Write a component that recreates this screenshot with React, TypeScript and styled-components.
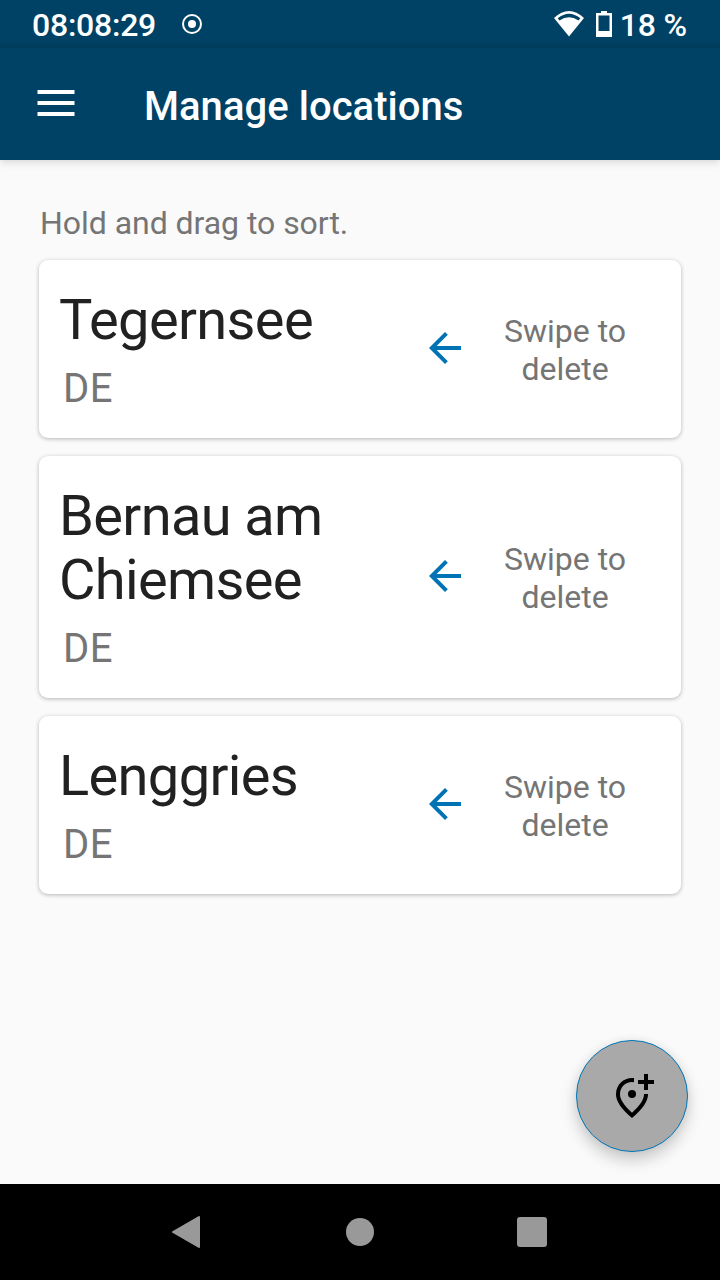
import React from "react";
import styled, { createGlobalStyle } from "styled-components";

const Global = createGlobalStyle`
  * { box-sizing: border-box; }
  body { margin: 0; font-family: Roboto, "Liberation Sans", sans-serif; }
`;
const Screen = styled.div`
  width: 720px; height: 1280px; display: flex; flex-direction: column;
  background: #fafafa; overflow: hidden; position: relative;
`;
const StatusBar = styled.div`
  height: 48px; flex: none; color: #fff;
  background: linear-gradient(#004265 0 40px, #003d5f 48px);
  display: flex; align-items: center; padding: 2px 33px 0 32px;
  font-size: 32px; font-weight: 500; line-height: 46px;
`;
const Clock = styled.span`letter-spacing: -0.25px;`;
const RecordIcon = styled.svg`margin: -2px 0 0 26px;`;
const StatusRight = styled.div`margin-left: auto; display: flex; align-items: center;`;
const StatusIcons = styled.svg`margin-top: -2px;`;
const BatteryText = styled.span`margin-left: 8px; letter-spacing: -0.15px;`;
const AppBar = styled.header`
  height: 112px; flex: none; background: #004265; display: flex; align-items: center;
  padding: 0 37px; box-shadow: 0 2px 8px rgba(0,0,0,.15);
`;
const MenuIcon = styled.svg`margin-top: -2px;`;
const Title = styled.h1`
  margin: 6px 0 0 69px; color: #fff; font-size: 40px; line-height: 48px; font-weight: 500;
  letter-spacing: 0.04px;
`;
const Content = styled.main`flex: 1; padding: 42px 39px 0;`;
const Hint = styled.p`
  margin: 0 0 0 1px; font-size: 32px; line-height: 42px; height: 58px; color: #757575;
  letter-spacing: -0.04px;
`;
const List = styled.div`display: flex; flex-direction: column; gap: 18px;`;
const Card = styled.article<{ $h: number }>`
  height: ${(p) => p.$h}px; display: flex; background: #fff; border-radius: 9px;
  box-shadow: 0 1px 4px rgba(0,0,0,.28);
`;
const Place = styled.div`width: 382px; padding: 28px 0 0 20px;`;
const Name = styled.h2`
  margin: 0; font-size: 56px; line-height: 64px; font-weight: 400; color: #212121;
  letter-spacing: -0.64px;
`;
const Country = styled.div`
  margin: 13px 0 0 4px; font-size: 40px; line-height: 48px; color: #757575;
  letter-spacing: 0.5px;
`;
const Swipe = styled.div`display: flex; align-items: center; gap: 27px; padding-top: 2px;`;
const ArrowIcon = styled.svg`margin-bottom: 4px;`;
const SwipeText = styled.div`width: 138px; text-align: center; font-size: 32px; line-height: 38px; color: #757575;`;
const Fab = styled.button`
  position: absolute; left: 576px; top: 1040px; width: 112px; height: 112px; border-radius: 50%;
  border: 1px solid #0077b8; background: #a9a9a9; padding: 0;
  box-shadow: 0 8px 16px rgba(0,0,0,.2), 0 0 8px rgba(0,0,0,.06);
  display: flex; align-items: center; justify-content: center;
`;
const NavBar = styled.nav`height: 96px; flex: none; background: #000;`;

const Arrow = () => (
  <ArrowIcon width="48" height="48" viewBox="0 0 24 24">
    <path fill="#0073b4" d="M20 11H7.83l5.59-5.59L12 4l-8 8 8 8 1.41-1.41L7.83 13H20z" />
  </ArrowIcon>
);
const places = [
  { lines: ["Tegernsee"], h: 178 },
  { lines: ["Bernau am", "Chiemsee"], h: 242 },
  { lines: ["Lenggries"], h: 178 },
];

export default function App() {
  return (
    <Screen>
      <Global />
      <StatusBar>
        <Clock>08:08:29</Clock>
        <RecordIcon width="20" height="20" viewBox="0 0 20 20">
          <circle cx="10" cy="10" r="9" fill="none" stroke="#fff" strokeWidth="2" />
          <circle cx="10" cy="10" r="4" fill="#fff" />
        </RecordIcon>
        <StatusRight>
          <StatusIcons width="58" height="28" viewBox="0 0 58 28">
            <path d="M0 8Q15-6 30 8L15 26.500Z" fill="#fff" />
            <path d="M3.700 8.300Q15-1 26.300 8.300L24.500 10.500Q15 4 5.500 10.500Z" fill="#004265" />
            <path d="M47 1h6v2h5v24H42V3h5zM44.500 5.500v15.500h11V5.500z" fill="#fff" fillRule="evenodd" />
          </StatusIcons>
          <BatteryText>18 %</BatteryText>
        </StatusRight>
      </StatusBar>
      <AppBar>
        <MenuIcon width="38" height="26" viewBox="0 0 38 26">
          <path fill="#fff" d="M.5 0h37v4H.5zM.5 11h37v4H.5zM.5 22h37v4H.5z" />
        </MenuIcon>
        <Title>Manage locations</Title>
      </AppBar>
      <Content>
        <Hint>Hold and drag to sort.</Hint>
        <List>
          {places.map((p) => (
            <Card key={p.lines[0]} $h={p.h}>
              <Place>
                <Name>{p.lines.map((l) => <div key={l}>{l}</div>)}</Name>
                <Country>DE</Country>
              </Place>
              <Swipe><Arrow /><SwipeText>Swipe to delete</SwipeText></Swipe>
            </Card>
          ))}
        </List>
      </Content>
      <NavBar>
        <svg width="720" height="96" viewBox="0 0 720 96" fill="#999">
          <path d="M173 48L199 33V63Z" stroke="#999" strokeWidth="2" strokeLinejoin="round" />
          <circle cx="360" cy="48" r="14" />
          <rect x="517" y="33" width="30" height="30" rx="3" />
        </svg>
      </NavBar>
      <Fab aria-label="Add location">
        <svg width="48" height="48" viewBox="0 0 24 24">
          <path d="M20 1v3h3v2h-3v3h-2V6h-3V4h3V1zM12 13a2 2 0 1 0 0-4 2 2 0 0 0 0 4zM13 3.060v2.020A6.500 6.500 0 0 0 12 5c-3.350 0-6 2.570-6 6.200 0 2.340 1.950 5.440 6 9.140 4.050-3.700 6-6.790 6-9.140V11h2v.2c0 3.320-2.670 7.250-8 11.800-5.330-4.550-8-8.480-8-11.800C4 6.220 7.800 3 12 3c.34 0 .67.02 1 .06z" />
        </svg>
      </Fab>
    </Screen>
  );
}
